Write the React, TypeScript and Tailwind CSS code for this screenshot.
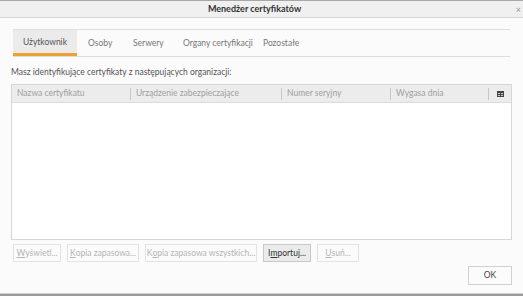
import React from 'react';

const tabs = [
  { label: 'Użytkownik', w: 'w-[64px]' },
  { label: 'Osoby', w: 'w-[45px]' },
  { label: 'Serwery', w: 'w-[50px]' },
  { label: 'Organy certyfikacji', w: 'w-[80px]' },
  { label: 'Pozostałe', w: 'w-[60px]' },
];

const columns = [
  { label: 'Nazwa certyfikatu', w: 'w-[119px]' },
  { label: 'Urządzenie zabezpieczające', w: 'w-[151px]' },
  { label: 'Numer seryjny', w: 'w-[109px]' },
  { label: 'Wygasa dnia', w: 'w-[98px]' },
];

function Btn({ label, u, enabled, w }: { label: string; u: number; enabled?: boolean; w: string }) {
  return (
    <div
      className={
        'h-[18px] flex items-center justify-center whitespace-nowrap border text-[8.5px] ' +
        w +
        (enabled
          ? ' bg-[#ebebeb] border-[#c8c8c8] text-[#333]'
          : ' bg-[#fbfbfb] border-[#e3e3e3] text-[#b4b4b4]')
      }
    >
      {label.slice(0, u)}
      <span className="underline">{label[u]}</span>
      {label.slice(u + 1)}
    </div>
  );
}

export default function App() {
  return (
    <div
      className="w-[523px] h-[296px] bg-[#fbfbfb] flex flex-col overflow-hidden"
      style={{ fontFamily: 'Lato, "Open Sans", sans-serif' }}
    >
      {/* title bar */}
      <div className="h-[18px] shrink-0 border-t border-b border-t-[#a8a8a8] border-b-[#d6d6d6] bg-[#f0f0f0] relative flex items-center justify-center pr-[14px]">
        <span className="text-[9px] font-bold text-[#333]">Menedżer certyfikatów</span>
        <span className="absolute right-[2px] top-[2px] text-[9px] text-[#999]">×</span>
      </div>

      <div className="flex-1 flex flex-col px-[11px] pt-[11px]">
        {/* tabs */}
        <div className="ml-[2px] mr-[2px] h-[28px] border-t border-b border-[#dedede] flex text-[8.5px] text-[#777]">
          {tabs.map((t, i) => (
            <div
              key={t.label}
              className={
                'h-full flex items-center whitespace-nowrap ' +
                t.w +
                (i === 0
                  ? ' justify-center bg-[#ebebeb] text-[#555] border-b-[3px] border-[#f0a030] pt-[2px]'
                  : ' pl-[11px]')
              }
            >
              {t.label}
            </div>
          ))}
        </div>

        <div className="mt-[10px] text-[8.5px] text-[#555] leading-[11px]">
          Masz identyfikujące certyfikaty z następujących organizacji:
        </div>

        {/* table */}
        <div className="mt-[6px] h-[156px] border border-[#d6d6d6] bg-white flex flex-col">
          <div className="h-[18px] bg-[#ececec] border-b border-[#dcdcdc] flex items-center text-[8.5px] text-[#a0a0a0]">
            {columns.map((c) => (
              <div key={c.label} className={c.w + ' flex items-center px-[5px] border-r border-[#c8c8c8] h-[12px] whitespace-nowrap'}>
                {c.label}
              </div>
            ))}
            <div className="flex-1 flex items-center justify-center">
              <svg width="7" height="6" viewBox="0 0 7 6">
                <rect x="0" y="0" width="7" height="6" fill="#444" />
                <rect x="1" y="2" width="2" height="1" fill="#ccc" />
                <rect x="4" y="2" width="2" height="1" fill="#ccc" />
                <rect x="1" y="4" width="2" height="1" fill="#ccc" />
                <rect x="4" y="4" width="2" height="1" fill="#ccc" />
              </svg>
            </div>
          </div>
        </div>

        {/* buttons */}
        <div className="mt-[4px] ml-[2px] flex gap-[6px]">
          <Btn label="Wyświetl..." u={0} w="w-[48px]" />
          <Btn label="Kopia zapasowa..." u={0} w="w-[72px]" />
          <Btn label="Kopia zapasowa wszystkich..." u={1} w="w-[112px]" />
          <Btn label="Importuj..." u={1} w="w-[48px]" enabled />
          <Btn label="Usuń..." u={0} w="w-[42px]" />
        </div>

        <div className="mt-[4px] flex justify-end">
          <div className="w-[44px] h-[19px] border border-[#d0d0d0] bg-[#fbfbfb] flex items-center justify-center text-[8.5px] text-[#444]">
            OK
          </div>
        </div>
      </div>

      <div className="h-[3px] shrink-0 bg-[#9a9a9a] border-t border-[#d0d0d0]" />
    </div>
  );
}
